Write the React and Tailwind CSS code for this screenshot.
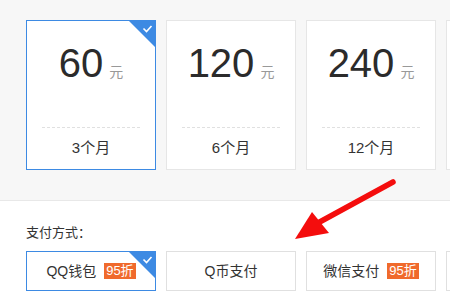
import React from 'react';

const plans = [
    { price: 60, unit: '元', months: '3个月', active: true },
    { price: 120, unit: '元', months: '6个月' },
    { price: 240, unit: '元', months: '12个月' },
    { price: null }, // 画面外，只露出边框
];

const methods = [
    { name: 'QQ钱包', badge: '95折', active: true },
    { name: 'Q币支付' },
    { name: '微信支付', badge: '95折' },
    { name: null },
];

// 선택된 항목 오른쪽 위 삼각형 체크
function Corner({ size = 26 }) {
    return (
        <svg className="absolute right-0 top-0" width={size} height={size} viewBox="0 0 26 26">
            <polygon points="0,0 26,0 26,26" fill="#3d8ae3" />
            <polyline points="14.5,7.5 17.5,10.5 22.5,5" fill="none" stroke="#fff" strokeWidth="1.6" />
        </svg>
    );
}

export default function App() {
    return (
        <div
            className="relative w-[450px] h-[300px] overflow-hidden bg-white text-[#333]"
            style={{ fontFamily: '"Liberation Sans", "Noto Sans CJK SC", sans-serif' }}
        >
            {/* 套餐 */}
            <div className="h-[201px] bg-[#f7f7f7] border-b border-[#e8e8e8] pt-[20px] pl-[26px]">
                <div className="flex gap-[10px]">
                    {plans.map((p, i) => (
                        <div
                            key={i}
                            className={`relative shrink-0 w-[130px] h-[150px] bg-white border flex flex-col ${
                                p.active ? 'border-[#3d8ae3]' : 'border-[#e6e6e6]'
                            }`}
                        >
                            {p.active && <Corner />}
                            <div className="h-[106px] pt-[22px] flex justify-center items-baseline">
                                {p.price && (
                                    <>
                                        <span className="text-[40px] leading-[40px] text-[#2b2b2b]">{p.price}</span>
                                        <span className="ml-[6px] text-[14px] text-[#999]">{p.unit}</span>
                                    </>
                                )}
                            </div>
                            <div className="mx-[15px] border-t border-dashed border-[#e0e0e0]"></div>
                            <div className="flex-1 flex items-center justify-center text-[15px] text-[#333] pb-[1px]">
                                {p.months}
                            </div>
                        </div>
                    ))}
                </div>
            </div>

            {/* 支付方式 */}
            <div className="pl-[26px] pt-[23px]">
                <div className="text-[13px] leading-[18px] text-[#333]">支付方式：</div>
                <div className="flex gap-[10px] mt-[9px]">
                    {methods.map((m, i) => (
                        <div
                            key={i}
                            className={`relative shrink-0 w-[130px] h-[40px] border flex items-center justify-center text-[14px] ${
                                m.active ? 'border-[#3d8ae3]' : 'border-[#e0e0e0]'
                            }`}
                        >
                            {m.active && <Corner />}
                            {m.name && <span>{m.name}</span>}
                            {m.badge && (
                                <span className="ml-[8px] bg-[#f06a2c] text-white text-[13px] leading-[16px] px-[2px]">
                                    {m.badge}
                                </span>
                            )}
                        </div>
                    ))}
                </div>
            </div>

            {/* 红色箭头标注 */}
            <svg className="absolute left-0 top-0 pointer-events-none" width="450" height="300">
                <line x1="393" y1="182" x2="316" y2="224" stroke="#f40d0d" strokeWidth="5.5" strokeLinecap="round" />
                <polygon points="295,239 312,212 329,233" fill="#f40d0d" />
            </svg>
        </div>
    );
}
